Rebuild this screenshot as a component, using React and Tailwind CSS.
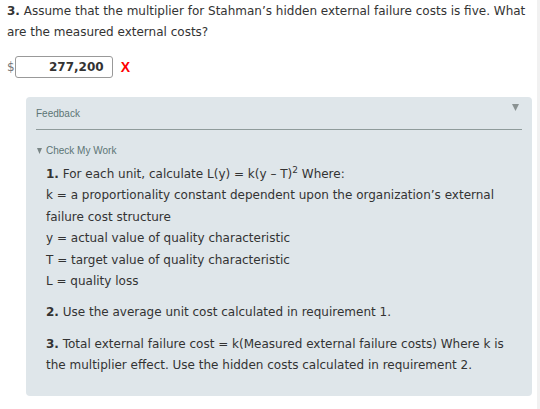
import React from 'react';

const verdana = { fontFamily: '"DejaVu Sans", Verdana, sans-serif' };
const arial = { fontFamily: '"Liberation Sans", Arial, sans-serif' };

function Triangle({ className }) {
  return (
    <svg viewBox="0 0 8 8" preserveAspectRatio="none" className={className}>
      <path d="M0 0 L8 0 L4 8 Z" fill="currentColor" />
    </svg>
  );
}

export default function App() {
  return (
    <div className="w-[540px] h-[409px] bg-white relative overflow-hidden text-[#333]" style={verdana}>
      {/* scrollbar track edge */}
      <div className="absolute right-0 top-0 bottom-0 w-[3px] bg-[#f1f1f1]"></div>

      <div className="pl-[7px] pr-[14px] pt-[1px] text-[12px] leading-[21px]">
        <p>
          <b>3.</b> Assume that the multiplier for Stahman’s hidden external failure costs is five. What are the measured external costs?
        </p>

        <div className="flex items-center mt-[13px] h-[22px]">
          <span className="text-[#777] text-[12px]">$</span>
          <div className="w-[98px] h-[22px] border border-[#999] rounded-[3px] flex items-center justify-end pr-[8px] font-bold text-[#333]">
            277,200
          </div>
          <span className="ml-[8px] text-[#ff0000] font-bold text-[14px]" style={arial}>X</span>
        </div>
      </div>

      <div className="ml-[26px] mt-[19px] w-[506px] h-[299px] bg-[#dfe6ea] rounded-[4px] px-[10px]">
        <div className="flex items-center justify-between h-[32px] pt-[1px] text-[10px] text-[#5d7575]" style={arial}>
          <span>Feedback</span>
          <Triangle className="w-[7px] h-[7px] text-[#8a9292] mr-[3px] -mt-[13px]" />
        </div>
        <div className="h-[1px] bg-[#8f9b9b]"></div>

        <div className="flex items-center gap-[4px] mt-[13px] pl-[1px] text-[10px] text-[#5d7575]" style={arial}>
          <Triangle className="w-[5px] h-[6px] text-[#7a8686]" />
          <span>Check My Work</span>
        </div>

        <div className="pl-[10px] pr-[10px] mt-[6px] text-[12px] leading-[21.4px] text-[#333]">
          <p>
            <b>1.</b> For each unit, calculate L(y) = k(y – T)
            <span className="relative -top-[5px] text-[9px] leading-none">2</span> Where:
          </p>
          <p>k = a proportionality constant dependent upon the organization’s external failure cost structure</p>
          <p>y = actual value of quality characteristic</p>
          <p>T = target value of quality characteristic</p>
          <p>L = quality loss</p>
          <p className="mt-[10px]">
            <b>2.</b> Use the average unit cost calculated in requirement 1.
          </p>
          <p className="mt-[10px]">
            <b>3.</b> Total external failure cost = k(Measured external failure costs) Where k is the multiplier effect. Use the hidden costs calculated in requirement 2.
          </p>
        </div>
      </div>
    </div>
  );
}
